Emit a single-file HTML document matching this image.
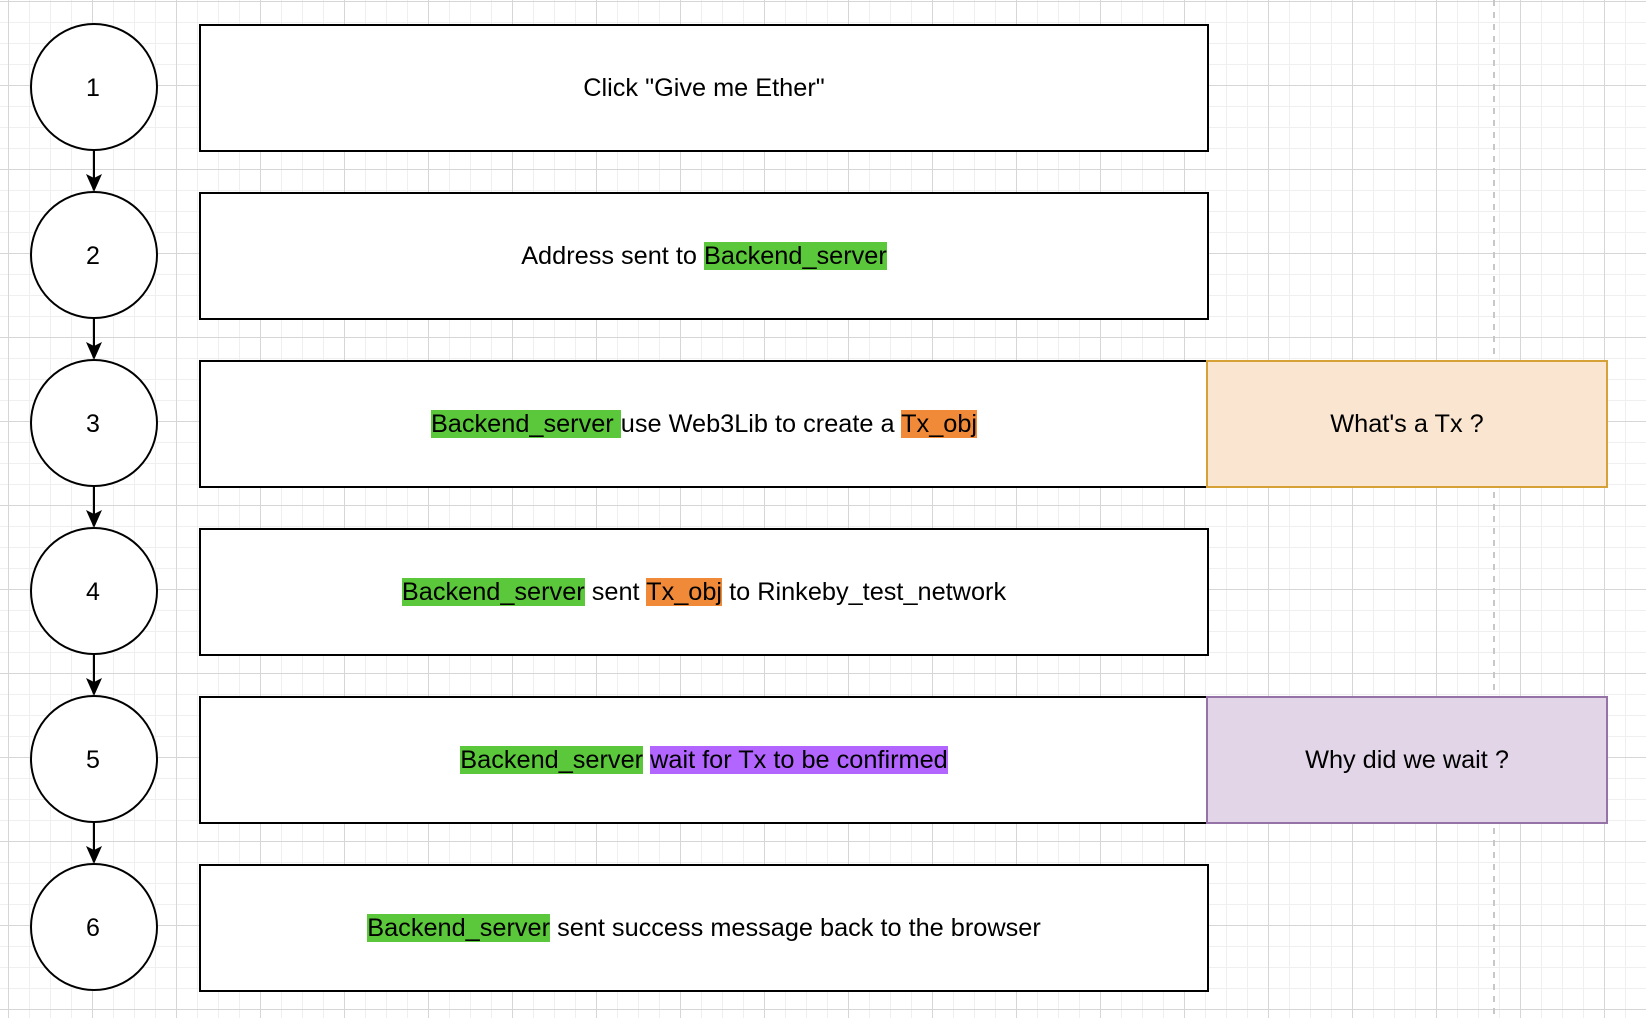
<!DOCTYPE html>
<html><head><meta charset="utf-8"><style>
html,body{margin:0;padding:0}
body{width:1646px;height:1018px;position:relative;overflow:hidden;background-color:#fff;
background-image:
linear-gradient(to right,#d6d6d6 1px,transparent 1px),
linear-gradient(to bottom,#d6d6d6 1px,transparent 1px),
linear-gradient(to right,#efefef 1px,transparent 1px),
linear-gradient(to bottom,#efefef 1px,transparent 1px);
background-size:84px 84px,84px 84px,21px 21px,21px 21px;
background-position:8px 0,0 1px,8px 0,0 1px;
font-family:"Liberation Sans",Arial,sans-serif;font-size:25.3px;color:#000}
.r{position:absolute;left:199px;width:1006px;height:124px;border:2px solid #000;background:#fff;display:flex;align-items:center;justify-content:center}
.r>span,.s>span{white-space:pre}
.g{background:#5bc73b}.o{background:#f08a38}.p{background:#b266ff}
.s{position:absolute;left:1206px;width:398px;height:124px;display:flex;align-items:center;justify-content:center}
</style></head><body>
<svg width="1646" height="1018" style="position:absolute;left:0;top:0">
<line x1="1494" y1="0" x2="1494" y2="1018" stroke="#c8c8c8" stroke-width="2" stroke-dasharray="6,6"/>
<g fill="#fff" stroke="#000" stroke-width="2">
<circle cx="94" cy="87" r="63"/><circle cx="94" cy="255" r="63"/><circle cx="94" cy="423" r="63"/>
<circle cx="94" cy="591" r="63"/><circle cx="94" cy="759" r="63"/><circle cx="94" cy="927" r="63"/>
</g>
<g stroke="#000" stroke-width="2">
<line x1="94" y1="150" x2="94" y2="180"/><line x1="94" y1="318" x2="94" y2="348"/>
<line x1="94" y1="486" x2="94" y2="516"/><line x1="94" y1="654" x2="94" y2="684"/>
<line x1="94" y1="822" x2="94" y2="852"/>
</g>
<g fill="#000">
<path d="M86 174 L94 192 L102 174 L94 178Z"/><path d="M86 342 L94 360 L102 342 L94 346Z"/>
<path d="M86 510 L94 528 L102 510 L94 514Z"/><path d="M86 678 L94 696 L102 678 L94 682Z"/>
<path d="M86 846 L94 864 L102 846 L94 850Z"/>
</g>
<g font-family="Liberation Sans,Arial,sans-serif" font-size="25" text-anchor="middle">
<text x="93" y="96">1</text><text x="93" y="264">2</text><text x="93" y="432">3</text>
<text x="93" y="600">4</text><text x="93" y="768">5</text><text x="93" y="936">6</text>
</g>
</svg>
<div class="r" style="top:24px"><span>Click "Give me Ether"</span></div>
<div class="r" style="top:192px"><span>Address sent to <span class="g">Backend_server</span></span></div>
<div class="r" style="top:360px"><span><span class="g">Backend_server </span>use Web3Lib to create a <span class="o">Tx_obj</span></span></div>
<div class="r" style="top:528px"><span><span class="g">Backend_server</span> sent <span class="o">Tx_obj</span> to Rinkeby_test_network</span></div>
<div class="r" style="top:696px"><span><span class="g">Backend_server</span> <span class="p">wait for Tx to be confirmed</span></span></div>
<div class="r" style="top:864px"><span><span class="g">Backend_server</span> sent success message back to the browser</span></div>
<div class="s" style="top:360px;background:#fae6d0;border:2px solid #d6a136"><span>What's a Tx ?</span></div>
<div class="s" style="top:696px;background:#e1d5e7;border:2px solid #9673a6"><span>Why did we wait ?</span></div>
</body></html>
